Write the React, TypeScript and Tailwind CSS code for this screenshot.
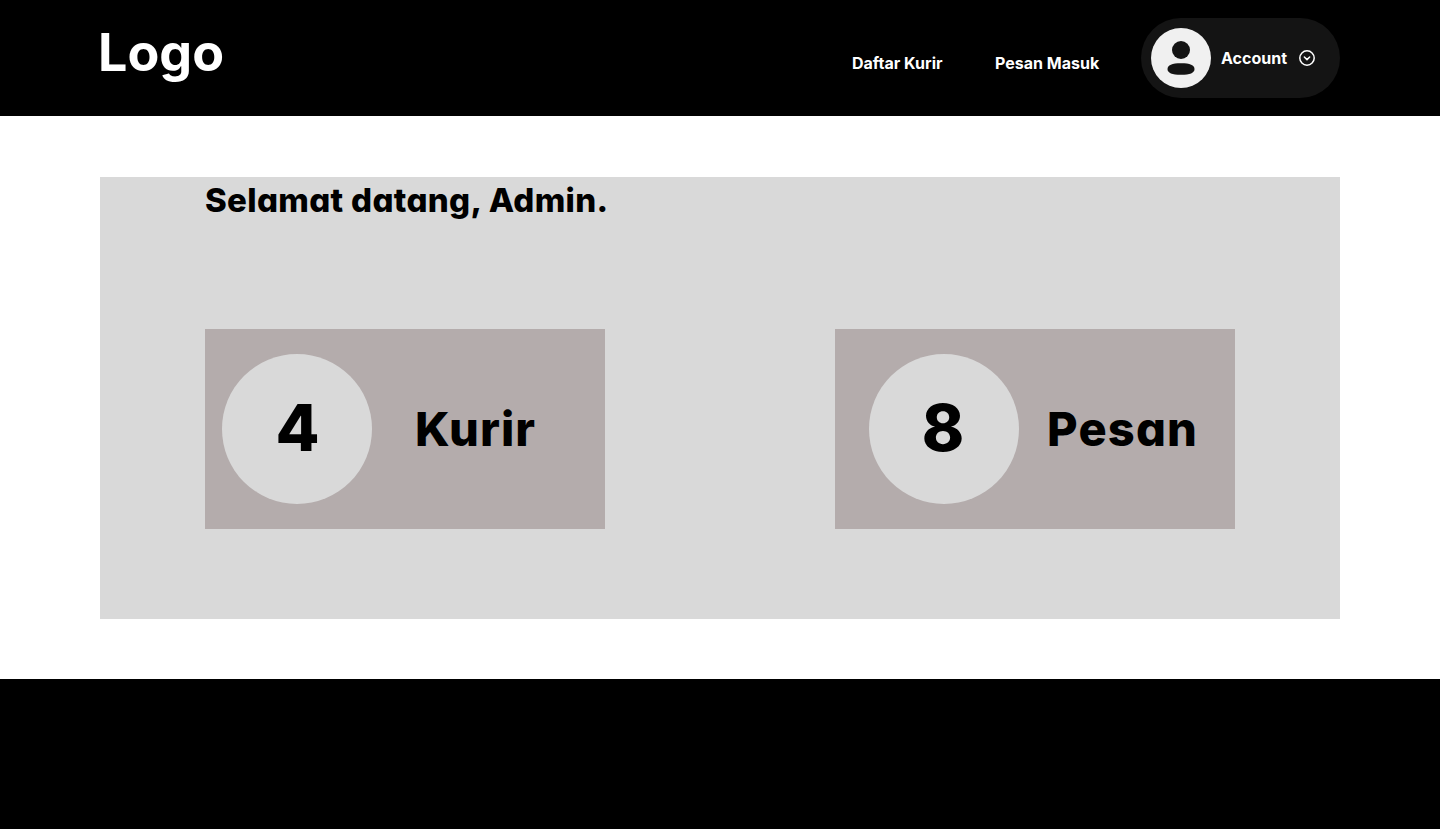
const heading = "font-['Inter',sans-serif] font-extrabold [font-feature-settings:'cv11'] whitespace-nowrap";
const count = "flex size-[150px] items-center justify-center rounded-full bg-[#d9d9d9] pb-0.5 text-[64px] leading-none font-extrabold tracking-[-1px]";

function Avatar() {
  return (
    <svg className="size-[60px] shrink-0" viewBox="0 0 60 60">
      <circle cx="30" cy="30" r="30" fill="#f0f0f0" />
      <circle cx="30" cy="22" r="9" fill="#141414" />
      <path d="M30 35.2c9 0 13.5 1.8 13.5 5.8S39 46.8 30 46.8 16.5 45 16.5 41 21 35.2 30 35.2Z" fill="#141414" />
    </svg>
  );
}

export default function App() {
  return (
    <div className="flex h-[829px] w-[1440px] flex-col bg-white font-['Inter',sans-serif] text-black">
      <header className="flex h-[116px] shrink-0 items-start bg-black px-[100px] text-white">
        <div className="-ml-[2px] mt-[22px] text-[52px] leading-[62px] font-bold whitespace-nowrap">Logo</div>
        <nav className="mt-[53px] ml-auto flex text-[16px] leading-5 font-bold whitespace-nowrap">
          <a className="w-[143px]">Daftar Kurir</a>
          <a className="w-[146px]">Pesan Masuk</a>
        </nav>
        <button className="mt-[18px] flex h-20 w-[199px] items-center rounded-full bg-[#141414] pl-2.5">
          <Avatar />
          <span className="ml-2.5 w-[77px] text-left text-[16px] leading-5 font-bold">Account</span>
          <svg className="size-[18px]" viewBox="0 0 18 18" fill="none" stroke="#fff" strokeWidth="1.5" strokeLinecap="round" strokeLinejoin="round">
            <circle cx="9" cy="9" r="7.2" />
            <path d="M6.35 8 9 10.65 11.65 8" />
          </svg>
        </button>
      </header>
      <main className="mx-[100px] mt-[61px] h-[442px] shrink-0 bg-[#d9d9d9] px-[105px]">
        <h1 className={`${heading} pt-px text-[33px] leading-[44px] tracking-[0.33px]`}>Selamat datang, Admin.</h1>
        <div className="mt-[107px] flex justify-between">
          <section className="flex h-[200px] w-[400px] items-center bg-[#b4acac] pl-[17px]">
            <div className={count}>4</div>
            <h2 className={`${heading} ml-[43px] pb-0.5 text-[47px] leading-none tracking-[1px]`}>Kurir</h2>
          </section>
          <section className="flex h-[200px] w-[400px] items-center bg-[#b4acac] pl-[34px]">
            <div className={`${count} pr-[3px]`}>8</div>
            <h2 className={`${heading} ml-[28px] pb-0.5 text-[47px] leading-none tracking-[1.2px]`}>Pesan</h2>
          </section>
        </div>
      </main>
      <footer className="mt-[60px] flex-1 bg-black" />
    </div>
  );
}
